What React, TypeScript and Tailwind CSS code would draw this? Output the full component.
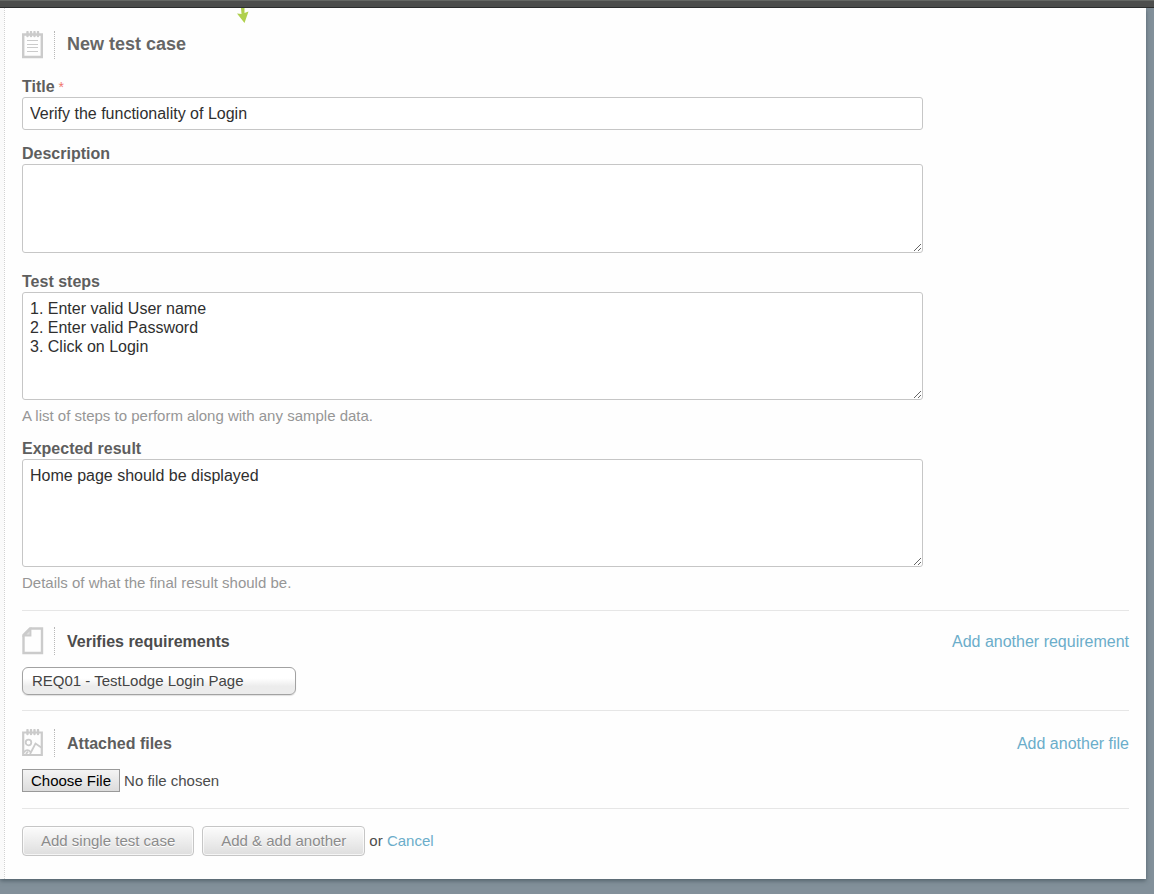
import { ReactNode } from 'react';

interface FieldProps {
  id: string;
  label: string;
  required?: boolean;
  hint?: string;
  className?: string;
  children: ReactNode;
}

function Field({ id, label, required, hint, className = '', children }: FieldProps) {
  return (
    <div className={className}>
      <label htmlFor={id} className="block pt-0.5 leading-5 font-bold text-[#5e5e5e]">
        {label}
        {required ? <span className="ml-1 text-sm font-normal text-[#f0776c]">*</span> : null}
      </label>
      {children}
      {hint ? <p className="mt-1.5 text-[15px] leading-5 text-[#969696]">{hint}</p> : null}
    </div>
  );
}

interface SectionHeadingProps {
  icon: ReactNode;
  action?: string;
  children: ReactNode;
}

function SectionHeading({ icon, action, children }: SectionHeadingProps) {
  return (
    <div className="flex items-center">
      <span className="flex h-7 w-[33px] shrink-0 items-center border-r border-dotted border-[#b8b8b8]">{icon}</span>
      <div className="ml-3 flex-1">{children}</div>
      {action ? (
        <a href="#" className="pt-0.5 text-[#6badca]">
          {action}
        </a>
      ) : null}
    </div>
  );
}

function NotepadIcon() {
  return (
    <svg width="22" height="28" viewBox="0 0 22 28" fill="none" stroke="#cbcbcb" aria-hidden="true">
      <path d="M1.2 3.500h18.600v22.500H1.200z" strokeWidth="2.400" />
      <path d="M5.500 1v4M9 1v4M12.500 1v4M16 1v4" strokeWidth="2.400" strokeLinecap="round" />
      <path d="M5 9.500h11M5 13.500h11M5 16.500h11M5 20.500h11" strokeWidth="1.200" />
    </svg>
  );
}

function PageIcon() {
  return (
    <svg width="22" height="28" viewBox="0 0 22 28" fill="none" stroke="#cbcbcb" aria-hidden="true">
      <path d="M8 1.500h12v24.500H1.500V8z" strokeWidth="2.400" />
      <path d="M8.500 2v6.500H2z" fill="#dedede" strokeWidth="1.800" />
    </svg>
  );
}

function PictureIcon() {
  return (
    <svg width="22" height="28" viewBox="0 0 22 28" fill="none" stroke="#cbcbcb" aria-hidden="true">
      <path d="M1.200 3.500h18.600v22.500H1.200z" strokeWidth="2.200" />
      <path d="M5.500 1v4M9 1v4M12.500 1v4M16 1v4" strokeWidth="2.400" strokeLinecap="round" />
      <circle cx="6.500" cy="13.500" r="2.800" strokeWidth="1.800" />
      <path d="M8 25l5.500-10.500L20 19M2 23.500c1.500-3 4.500-3 6.500-.5M4 25l2-2.500" strokeWidth="1.800" />
    </svg>
  );
}

const fieldClass =
  'block w-full max-w-[901px] rounded-[3px] border border-[#c6c6c6] bg-white px-[7px] text-[#2f2f2f] outline-none';
const buttonClass =
  'h-[30px] rounded border border-[#c6c6c6] bg-linear-to-b from-[#fcfcfc] to-[#dedede] px-[18px] text-[15px] text-[#8b8b8b] shadow-[inset_0_0_0_1px_rgba(255,255,255,0.7)] [text-shadow:0_1px_0_#fff]';

export default function App() {
  return (
    <div className="flex min-h-screen flex-col bg-[#82909a] font-['Liberation_Sans',Arial,sans-serif] text-base text-[#4c4c4c]">
      <div className="h-2 border-t border-b border-t-[#656865] border-b-[#2c2c2c] bg-[#4d4e4d]" />

      <main className="relative mr-2 border-l-4 border-[#fafafa] bg-[#fefefe] shadow-[0_2px_4px_rgba(60,75,85,0.65)]">
        <svg
          className="absolute top-0 left-[233px]"
          width="12"
          height="15"
          viewBox="0 0 12 15"
          fill="#b0d04e"
          aria-hidden="true"
        >
          <path d="M4 0h3.500v5l4-1.500L7.500 15 0 5.500 4.500 6z" />
        </svg>

        <form
          className="border-l border-dotted border-[#d2d2d2] pt-[23px] pr-[17px] pb-[23px] pl-[17px]"
          onSubmit={(e) => e.preventDefault()}
        >
          <SectionHeading icon={<NotepadIcon />}>
            <h1 className="pb-0.5 text-lg leading-6 font-bold text-[#666]">New test case</h1>
          </SectionHeading>

          <Field id="title" label="Title" required className="mt-4">
            <input
              id="title"
              type="text"
              defaultValue="Verify the functionality of Login"
              className={`h-[33px] ${fieldClass}`}
            />
          </Field>

          <Field id="description" label="Description" className="mt-3">
            <textarea id="description" className={`h-[89px] py-1.5 leading-[19px] ${fieldClass}`} />
          </Field>

          <Field
            id="steps"
            label="Test steps"
            hint="A list of steps to perform along with any sample data."
            className="mt-[17px]"
          >
            <textarea
              id="steps"
              defaultValue={'1. Enter valid User name\n2. Enter valid Password\n3. Click on Login'}
              className={`h-[108px] py-1.5 leading-[19px] ${fieldClass}`}
            />
          </Field>

          <Field
            id="expected"
            label="Expected result"
            hint="Details of what the final result should be."
            className="mt-[11px]"
          >
            <textarea
              id="expected"
              defaultValue="Home page should be displayed"
              className={`h-[108px] py-1.5 leading-[19px] ${fieldClass}`}
            />
          </Field>

          <section className="mt-[17px] border-t border-[#e6e6e6] pt-4">
            <SectionHeading icon={<PageIcon />} action="Add another requirement">
              <h2 className="pt-0.5 font-bold">Verifies requirements</h2>
            </SectionHeading>
            <select
              aria-label="Verifies requirements"
              className="mt-3 block h-7 w-[274px] appearance-none rounded-md border border-[#a2a2a2] bg-linear-to-b from-white from-40% to-[#ececec] to-70% px-[9px] text-[15px] text-[#444] shadow-[0_1px_1px_rgba(0,0,0,0.12)]"
            >
              <option>REQ01 - TestLodge Login Page</option>
            </select>
          </section>

          <section className="mt-[15px] border-t border-[#e6e6e6] pt-[18px]">
            <SectionHeading icon={<PictureIcon />} action="Add another file">
              <h2 className="pt-0.5 font-bold text-[#5e5e5e]">Attached files</h2>
            </SectionHeading>
            <input
              type="file"
              aria-label="Attached files"
              className="mt-3 block text-[15px] leading-5 file:mr-1 file:h-[23px] file:border file:border-solid file:border-[#999] file:bg-linear-to-b file:from-[#f4f4f4] file:to-[#dcdcdc] file:px-2 file:text-[15px] file:text-black"
            />
          </section>

          <div className="mt-4 flex items-center border-t border-[#e6e6e6] pt-[17px] text-[15px]">
            <button type="submit" className={buttonClass}>
              Add single test case
            </button>
            <button type="submit" className={`ml-2 ${buttonClass}`}>
              Add &amp; add another
            </button>
            <span className="ml-1">
              or{' '}
              <a href="#" className="text-[#6badca]">
                Cancel
              </a>
            </span>
          </div>
        </form>
      </main>
    </div>
  );
}
